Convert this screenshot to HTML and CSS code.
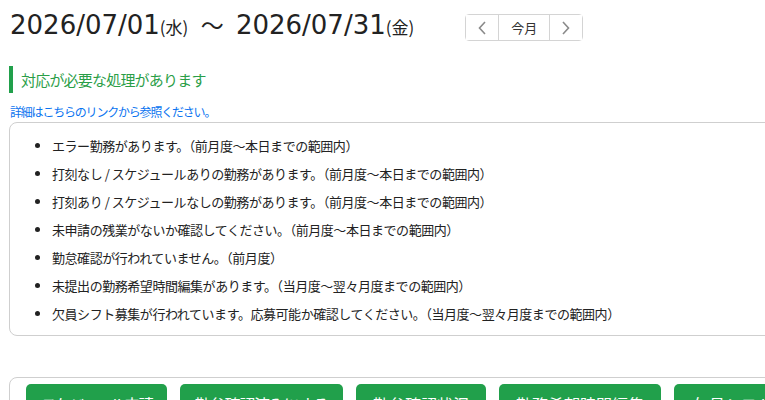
FILE: index.html
```html
<!DOCTYPE html>
<html lang="ja">
<head>
<meta charset="utf-8">
<link rel="stylesheet" href="styles.css">
</head>
<body>
<div class="page">
  <div class="header">
    <h1 class="period">2026/07/01<span class="dow">(水)</span> <span class="tilde">〜</span> 2026/07/31<span class="dow">(金)</span></h1>
    <div class="nav">
      <button class="nav-btn nav-arrow" type="button"><svg width="8" height="14" viewBox="0 0 8 14"><polyline points="7,1 1.5,7 7,13" fill="none" stroke="#8a8a8a" stroke-width="1.6"/></svg></button>
      <button class="nav-btn nav-month" type="button">今月</button>
      <button class="nav-btn nav-arrow" type="button"><svg width="8" height="14" viewBox="0 0 8 14"><polyline points="1,1 6.5,7 1,13" fill="none" stroke="#8a8a8a" stroke-width="1.6"/></svg></button>
    </div>
  </div>

  <h2 class="notice-title">対応が必要な処理があります</h2>
  <a class="detail-link" href="#">詳細はこちらのリンクから参照ください。</a>

  <div class="panel">
    <ul class="todo-list">
      <li>エラー勤務があります。（前月度〜本日までの範囲内）</li>
      <li>打刻なし / スケジュールありの勤務があります。（前月度〜本日までの範囲内）</li>
      <li>打刻あり / スケジュールなしの勤務があります。（前月度〜本日までの範囲内）</li>
      <li>未申請の残業がないか確認してください。（前月度〜本日までの範囲内）</li>
      <li>勤怠確認が行われていません。（前月度）</li>
      <li>未提出の勤務希望時間編集があります。（当月度〜翌々月度までの範囲内）</li>
      <li>欠員シフト募集が行われています。応募可能か確認してください。（当月度〜翌々月度までの範囲内）</li>
    </ul>
  </div>

  <div class="panel actions">
    <button class="action-btn" type="button">スケジュール申請</button>
    <button class="action-btn" type="button">勤怠確認済みにする</button>
    <button class="action-btn" type="button">勤怠確認状況</button>
    <button class="action-btn" type="button">勤務希望時間編集</button>
    <button class="action-btn" type="button">欠員シフト募集</button>
  </div>
</div>
</body>
</html>
```

FILE: styles.css
```css
html, body {
  margin: 0;
  padding: 0;
  overflow: hidden;
  background: #fff;
}
body {
  font-family: "DejaVu Sans", "Noto Sans CJK JP", sans-serif;
  color: #222;
}
.page {
  width: 820px;
  padding: 7px 0 0 9px;
}
.header {
  display: flex;
  align-items: flex-start;
}
.period {
  margin: 0;
  font-weight: normal;
  font-size: 26px;
  line-height: 34px;
  padding-left: 1px;
  white-space: nowrap;
}
.dow {
  font-family: "Noto Sans CJK JP", sans-serif;
  font-size: 17px;
}
.tilde {
  font-family: "Noto Sans CJK JP", sans-serif;
  font-size: 23px;
  margin: 0 4px;
}
.nav {
  display: flex;
  margin-left: 51px;
  margin-top: 7px;
  border: 1px solid #d4d4d4;
  border-radius: 4px;
  height: 25px;
}
.nav-btn {
  border: none;
  background: #fff;
  padding: 0;
  font-family: "Noto Sans CJK JP", sans-serif;
  font-size: 13px;
  color: #333;
  display: flex;
  align-items: center;
  justify-content: center;
}
.nav-arrow {
  width: 32px;
}
.nav-month {
  width: 52px;
  border-left: 1px solid #d4d4d4;
  border-right: 1px solid #d4d4d4;
}
.notice-title {
  margin: 22px 0 0 0;
  height: 27px;
  border-left: 4px solid #21a04b;
  padding-left: 8px;
  font-weight: normal;
  font-family: "Noto Sans CJK JP", sans-serif;
  font-size: 15px;
  line-height: 27px;
  letter-spacing: -0.8px;
  color: #2a9e47;
}
.detail-link {
  display: block;
  margin-top: 12px;
  font-family: "Noto Sans CJK JP", sans-serif;
  font-size: 12px;
  line-height: 14px;
  letter-spacing: -1.2px;
  color: #0b74f0;
  text-decoration: none;
  padding-left: 1px;
}
.panel {
  border: 1px solid #cfcfcf;
  border-radius: 8px;
  margin-top: 3px;
}
.todo-list {
  margin: 0;
  padding: 9px 0 7px 42px;
  font-family: "Noto Sans CJK JP", sans-serif;
  font-size: 13px;
  line-height: 28px;
  color: #222;
}
.todo-list li {
  letter-spacing: -0.45px;
  white-space: nowrap;
}
.actions {
  margin-top: 41px;
  display: flex;
  gap: 13px;
  padding: 6px 16px 8px;
}
.action-btn {
  flex: none;
  height: 40px;
  border: none;
  border-radius: 5px;
  background: #21a04b;
  color: #fff;
  font-family: "Noto Sans CJK JP", sans-serif;
  font-size: 16px;
  padding: 0;
  white-space: nowrap;
  text-align: center;
}
.action-btn:nth-child(1) { width: 141px; letter-spacing: -2px; }
.action-btn:nth-child(2) { width: 163px; letter-spacing: -1.2px; }
.action-btn:nth-child(3) { width: 130px; }
.action-btn:nth-child(4) { width: 162px; }
.action-btn:nth-child(5) { width: 150px; }
```
